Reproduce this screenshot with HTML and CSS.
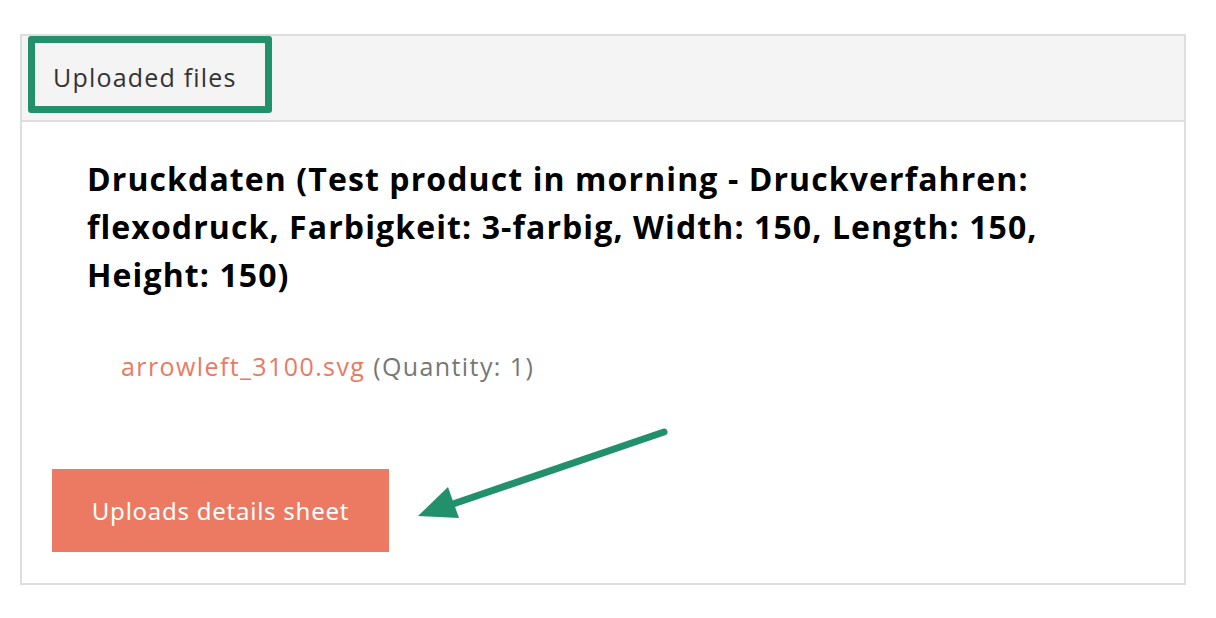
FILE: index.html
```html
<!DOCTYPE html>
<html>
<head>
<meta charset="utf-8">
<link rel="stylesheet" href="styles.css">
</head>
<body>
<div class="card">
  <div class="card-header">
    <span class="title-box">Uploaded files</span>
  </div>
  <div class="card-body">
    <h3 class="product">Druckdaten (Test product in morning - Druckverfahren: flexodruck, Farbigkeit: 3-farbig, Width: 150, Length: 150, Height: 150)</h3>
    <ul class="files">
      <li><a class="file-link">arrowleft_3100.svg</a> <span class="qty">(Quantity: 1)</span></li>
    </ul>
    <button class="btn">Uploads details sheet</button>
  </div>
  <svg class="arrow" width="260" height="100" viewBox="0 0 260 100">
    <line x1="248" y1="4" x2="34" y2="77" stroke="#22906b" stroke-width="7" stroke-linecap="round"/>
    <polygon points="2,88 32,59 43,90" fill="#22906b"/>
  </svg>
</div>
</body>
</html>
```
FILE: styles.css
```css
* { box-sizing: border-box; }
html, body { margin: 0; background: #fff; }
body {
  padding: 34px 30px 0 20px;
  font-family: "Open Sans", "Lato", sans-serif;
}
.card {
  position: relative;
  width: 1166px;
  border: 2px solid #dedede;
}
.card-header {
  height: 86px;
  background: #f4f4f4;
  border-bottom: 2px solid #dedede;
  padding: 0 0 0 6px;
}
.title-box {
  display: inline-flex;
  align-items: center;
  height: 77px;
  width: 244px;
  padding: 5px 0 0 18px;
  border: 7px solid #22906b;
  border-radius: 3px;
  font-size: 25px;
  letter-spacing: 1.2px;
  color: #333;
}
.card-body {
  padding: 33px 30px 31px 30px;
}
.product {
  margin: 0 0 0 35px;
  font-size: 32px;
  line-height: 48px;
  font-weight: 700;
  letter-spacing: 1.1px;
  color: #000;
  max-width: 1000px;
}
.files {
  list-style: none;
  margin: 52px 0 0 0;
  padding: 0 0 0 69px;
  font-size: 25px;
  line-height: 30px;
  letter-spacing: 1.4px;
}
.file-link { color: #e97a63; }
.qty { color: #777; }
.btn {
  display: block;
  margin-top: 88px;
  width: 337px;
  height: 83px;
  border: 0;
  background: #ec7a62;
  color: #fff;
  font-family: "Noto Sans", "Open Sans", sans-serif;
  font-size: 24px;
  letter-spacing: 0.75px;
  padding: 0;
}
.arrow {
  position: absolute;
  left: 394px;
  top: 392px;
}
```
